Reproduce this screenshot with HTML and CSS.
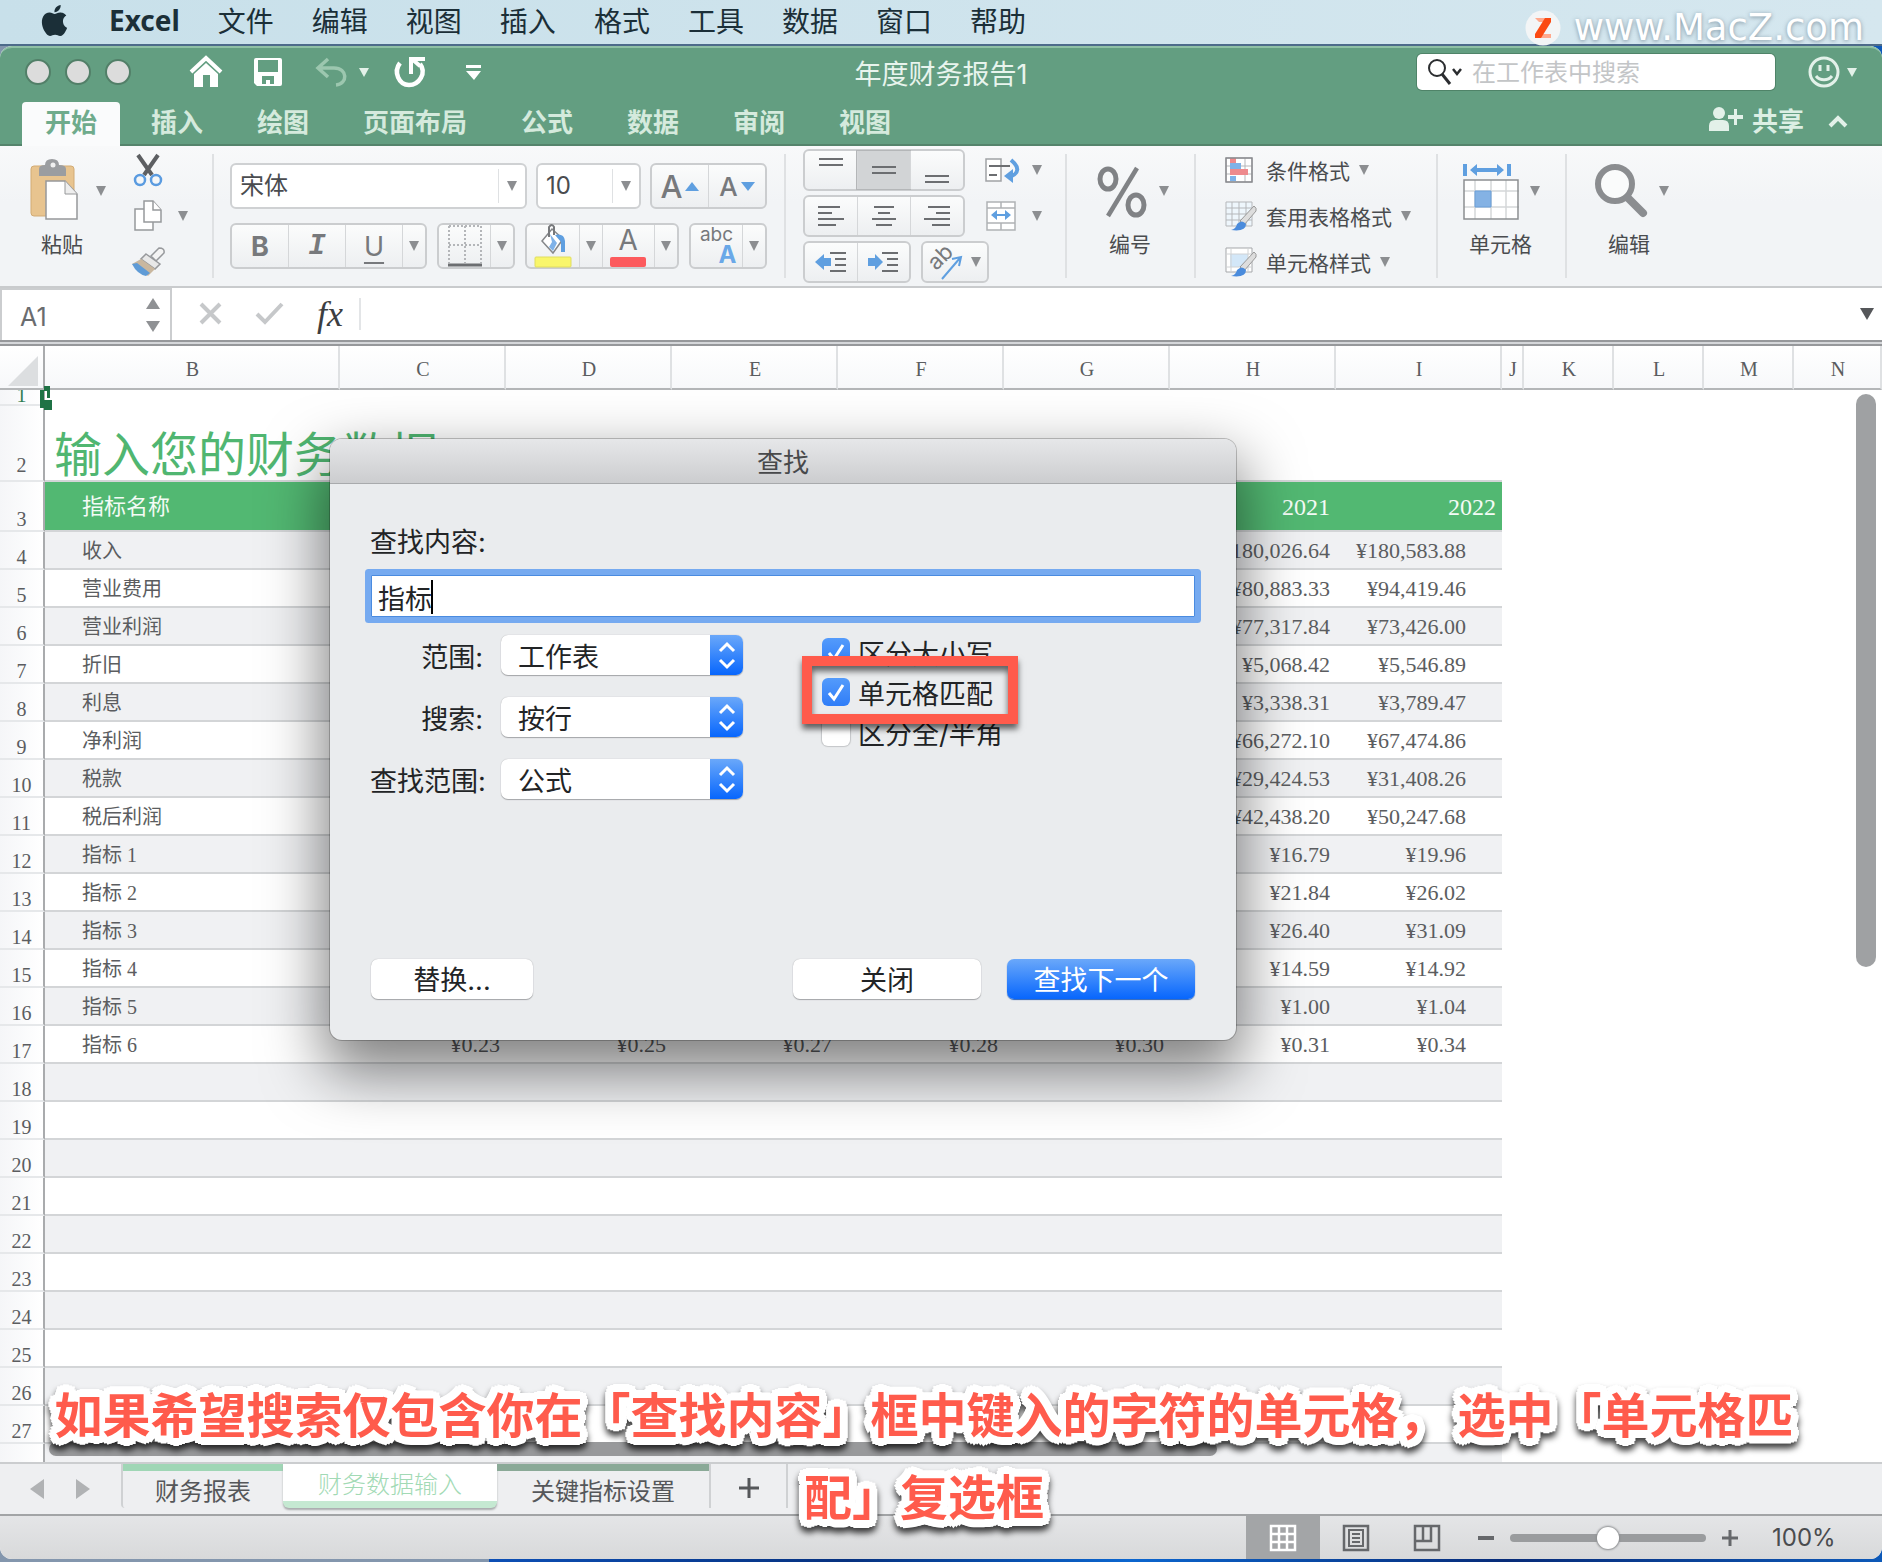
FILE: index.html
```html
<!DOCTYPE html>
<html lang="zh-CN">
<head>
<meta charset="utf-8">
<title>年度财务报告1</title>
<link rel="stylesheet" href="styles.css">
</head>
<body>
<header class="menubar">
  <svg class="apple" viewBox="0 0 24 24" aria-hidden="true"><path d="M12.152 6.896c-.948 0-2.415-1.078-3.96-1.04-2.04.027-3.91 1.183-4.961 3.014-2.117 3.675-.546 9.103 1.519 12.09 1.013 1.454 2.208 3.09 3.792 3.039 1.52-.065 2.09-.987 3.935-.987 1.831 0 2.35.987 3.96.948 1.637-.026 2.676-1.48 3.676-2.948 1.156-1.688 1.636-3.325 1.662-3.415-.039-.013-3.182-1.221-3.22-4.857-.026-3.04 2.48-4.494 2.597-4.559-1.429-2.09-3.623-2.324-4.39-2.376-2-.156-3.675 1.09-4.61 1.09zM15.53 3.83c.843-1.012 1.4-2.427 1.245-3.83-1.207.052-2.662.805-3.532 1.818-.78.896-1.454 2.338-1.273 3.714 1.338.104 2.715-.688 3.559-1.701"/></svg>
  <b class="app-name">Excel</b>
  <nav class="menus"><span>文件</span><span>编辑</span><span>视图</span><span>插入</span><span>格式</span><span>工具</span><span>数据</span><span>窗口</span><span>帮助</span></nav>
  <div class="watermark">
    <svg width="36" height="36" viewBox="0 0 36 36" aria-hidden="true"><circle cx="18" cy="18" r="17.500" fill="#f3f5f6"/><path d="M10 8h16v4h-12z" fill="#ffa98d"/><path d="M22 24h4v4H10v-4z" fill="#ffa98d"/><path d="M20 8h6v4L16 28h-6v-4z" fill="#fb4a12"/></svg>
    <span>www.MacZ.com</span>
  </div>
</header>

<main class="window">
  <div class="titlebar">
    <div class="title-left">
      <i class="light"></i><i class="light"></i><i class="light"></i>
      <button class="tool home" aria-label="主页"><svg width="32" height="32" viewBox="0 0 32 32"><path d="M1 16 16 2l15 14" fill="none" stroke="#fff" stroke-width="4"/><path d="M4 18 16 7l12 11v13h-8V19h-7v12H4z" fill="#fff"/></svg></button>
      <button class="tool save" aria-label="保存"><svg width="28" height="28" viewBox="0 0 28 28"><path fill-rule="evenodd" fill="#fff" d="M2 0h24q2 0 2 2v24q0 2-2 2H3l-3-3V2q0-2 2-2zM4 2v12h20V2zM8 18v8h4v-4h4v4h4v-8z"/></svg></button>
      <button class="tool undo" aria-label="撤销"><svg width="31" height="30" viewBox="0 0 31 30"><path d="M12 2 2 11l10 9M3 11h15c14 0 14 16 2 17" fill="none" stroke="#9cc7af" stroke-width="3.500"/></svg><i class="caret pale"></i></button>
      <button class="tool redo" aria-label="恢复"><svg width="32" height="32" viewBox="0 0 32 32"><path d="M6 7C-1 16 5 29 15 29s18-12 11-21" fill="none" stroke="#fff" stroke-width="4.500"/><path d="M17 18V3h14M18 3l8 7" fill="none" stroke="#fff" stroke-width="4"/></svg></button>
      <button class="tool custom" aria-label="自定义"><svg width="15" height="16" viewBox="0 0 15 16"><path d="M0 1h15v3H0zM0 7h15l-7 9z" fill="#fff"/></svg></button>
    </div>
    <h1 class="doc-title">年度财务报告1</h1>
    <div class="title-right">
      <label class="search">
        <svg width="36" height="30" viewBox="0 0 36 30" fill="none" stroke="#2b2d30"><circle cx="10" cy="11" r="8" stroke-width="2"/><path d="m15 17 8 10" stroke-width="3"/><path d="m26 12 4 5 4-5" stroke-width="2.500"/></svg>
        <input type="text" placeholder="在工作表中搜索" aria-label="在工作表中搜索">
      </label>
      <button class="smile" aria-label="反馈"><svg width="32" height="32" viewBox="0 0 32 32" fill="none" stroke="#e3f1e9" stroke-width="3"><circle cx="16" cy="16" r="14"/><path d="M12 9v6M20 9v6M8 20c4 5 12 5 16 0"/></svg><i class="caret pale"></i></button>
    </div>
  </div>
  <nav class="tabs">
    <button class="tab active">开始</button><button class="tab">插入</button><button class="tab">绘图</button><button class="tab">页面布局</button><button class="tab">公式</button><button class="tab">数据</button><button class="tab">审阅</button><button class="tab">视图</button>
    <button class="share"><svg width="34" height="26" viewBox="0 0 34 26" fill="#e3f1e9"><circle cx="10" cy="7" r="6"/><path d="M0 25v-5q0-6 6-6h8q6 0 6 6v5zM25 3h3v16h-3zM19 9h15v4H19z"/></svg>共享</button>
    <button class="collapse" aria-label="折叠功能区"><svg width="20" height="14" viewBox="0 0 20 14"><path d="m2 12 8-8 8 8" fill="none" stroke="#e3f1e9" stroke-width="4"/></svg></button>
  </nav>

  <section class="ribbon">
    <div class="group g-paste">
      <button class="big"><span class="big-row"><svg width="52" height="62" viewBox="0 0 52 62"><rect x="3" y="6" width="43" height="50" rx="3" fill="#e8c48f" stroke="#d2ab74"/><path d="M11 9q0-4 6-4 0-6 7-6t7 6q7 0 7 4v7H11z" fill="#9b9da0"/><circle cx="25" cy="5" r="2.500" fill="#f0f0f0"/><path d="M18 21h19l12 13v25H18z" fill="#fff" stroke="#96989a" stroke-width="1.500"/><path d="M37 21v13h12" fill="#eee" stroke="#96989a"/></svg><i class="caret"></i></span><span class="big-label">粘贴</span></button>
      <div class="rows">
        <button class="mini" aria-label="剪切"><svg width="34" height="34" viewBox="0 0 34 34"><path d="M7 2 21 22M27 2 13 22" stroke="#5d5f62" stroke-width="4"/><circle cx="9" cy="27" r="5" fill="none" stroke="#5a9be0" stroke-width="2.500"/><circle cx="25" cy="27" r="5" fill="none" stroke="#5a9be0" stroke-width="2.500"/></svg></button>
        <button class="mini" aria-label="复制"><svg width="34" height="32" viewBox="0 0 34 32" fill="#fff" stroke="#97999c" stroke-width="1.500"><path d="M4 9h18v21H4z"/><path d="M13 1h9l8 9v12H13z"/><path d="M22 1v9h8"/></svg><i class="caret"></i></button>
        <button class="mini" aria-label="格式刷"><svg width="34" height="30" viewBox="0 0 34 30"><path d="m20 9 8-8q6 0 5 5l-8 8z" fill="#f4f4f4" stroke="#97999c" stroke-width="1.500"/><path d="m15 7 14 10-5 5L10 12z" fill="#e8e8e8" stroke="#97999c" stroke-width="1.500"/><path d="M10 12 24 22l-7 7L1 17z" fill="#c9b79f"/><path d="m6 16 13 10-4 3q-9-2-14-12z" fill="#5f9bd6"/></svg></button>
      </div>
    </div>
    <i class="sep"></i>
    <div class="group g-font">
      <div class="line">
        <span class="combo w-font"><select aria-label="字体"><option>宋体</option></select><i class="combo-arrow"><i class="caret"></i></i></span>
        <span class="combo w-size"><select aria-label="字号"><option>10</option></select><i class="combo-arrow"><i class="caret"></i></i></span>
        <span class="seg w-grow"><button class="aa">A<i class="tri-up"></i></button><button class="aa small">A<i class="tri-down"></i></button></span>
      </div>
      <div class="line second">
        <span class="seg w-biu"><button class="bold">B</button><button class="ital">I</button><button class="under">U</button><button class="drop" aria-label="下划线选项"><i class="caret"></i></button></span>
        <span class="seg w-one"><button aria-label="边框"><svg width="34" height="42" viewBox="0 0 34 42"><path d="M1 1h32v37M1 1v37M17 1v37M1 20h32" fill="none" stroke="#b4b6b9" stroke-width="2" stroke-dasharray="2 2"/><path d="M0 40h34" stroke="#6c6e71" stroke-width="3"/></svg></button><button class="drop" aria-label="边框选项"><i class="caret"></i></button></span>
        <span class="seg w-two"><button aria-label="填充颜色"><svg width="36" height="42" viewBox="0 0 36 42"><path d="M7 16 17 4l11 10-10 14z" fill="#fff" stroke="#85878a" stroke-width="1.500"/><path d="M14 12V2q3-4 5 0v8" fill="none" stroke="#77797c" stroke-width="2"/><path d="m15 9 7 9-4 8-4-4 3-5z" fill="#7fb2e8"/><path d="M20 10q9-2 10 6v11h-4V17z" fill="#5f9fe0"/><rect y="32" width="36" height="10" rx="1" fill="#f9f66b" stroke="#e0dd61"/></svg></button><button class="drop" aria-label="填充选项"><i class="caret"></i></button><button aria-label="字体颜色" class="fontcolor"><span>A</span><i></i></button><button class="drop" aria-label="字体颜色选项"><i class="caret"></i></button></span>
        <span class="seg w-one"><button class="phon" aria-label="拼音"><span>abc</span><b>A</b></button><button class="drop" aria-label="拼音选项"><i class="caret"></i></button></span>
      </div>
    </div>
    <i class="sep"></i>
    <div class="group rows g-align">
      <div class="line">
        <span class="seg w-three"><button aria-label="顶端对齐"><svg width="26" height="36"><path d="M1 7h24M1 13h24"/></svg></button><button class="on" aria-label="垂直居中"><svg width="26" height="36"><path d="M1 15h24M1 21h24"/></svg></button><button aria-label="底端对齐"><svg width="26" height="36"><path d="M1 24h24M1 30h24"/></svg></button></span>
        <button class="mini wide" aria-label="自动换行"><svg width="36" height="26" viewBox="0 0 36 26"><path d="M1 2h15v22H1z" fill="#fff" stroke="#a0a2a5" stroke-width="1.500"/><path d="M4 9h21M4 18h8" stroke="#6c6e71" stroke-width="2"/><path d="M26 3q13 11-1 17" fill="none" stroke="#5f9fe0" stroke-width="4"/><path d="m19 19 9-7v14z" fill="#5f9fe0"/></svg><i class="caret"></i></button>
      </div>
      <div class="line">
        <span class="seg w-three"><button aria-label="左对齐"><svg width="26" height="24"><path d="M0 3h22M0 9h14M0 15h26M0 21h18"/></svg></button><button aria-label="居中"><svg width="26" height="24"><path d="M3 3h20M7 9h12M1 15h24M5 21h16"/></svg></button><button aria-label="右对齐"><svg width="26" height="24"><path d="M4 3h22M12 9h14M0 15h26M8 21h18"/></svg></button></span>
        <button class="mini wide" aria-label="合并"><svg width="36" height="30" viewBox="0 0 36 30"><path d="M2 1h28v28H2zM2 7h28M2 22h28M16 1v6M16 22v7" fill="#fff" stroke="#b0b2b5" stroke-width="1.500"/><path d="M8 14h16" stroke="#5f9fe0" stroke-width="2"/><path d="m6 14 6-5v10zM26 14l-6-5v10z" fill="#5f9fe0"/></svg><i class="caret"></i></button>
      </div>
      <div class="line">
        <span class="seg w-dent"><button aria-label="减少缩进"><svg width="32" height="24"><path d="M15 3h16M20 9h11M20 15h11M15 21h16"/><path d="M0 12 9 4v4h7v8H9v4z" class="blue"/></svg></button><button aria-label="增加缩进"><svg width="32" height="24"><path d="M15 3h16M20 9h11M20 15h11M15 21h16"/><path d="M16 12 8 4v4H1v8h7v4z" class="blue"/></svg></button></span>
        <span class="seg w-rot"><button aria-label="方向"><svg width="36" height="34" viewBox="0 0 36 34"><text x="3" y="24" transform="rotate(-45 8 20)" class="ab">ab</text><path class="blue-line" d="M13 34 31 13M23 14l9-2-2 9"/></svg><i class="caret"></i></button></span>
      </div>
    </div>
    <i class="sep"></i>
    <div class="group g-num">
      <button class="big"><span class="big-row"><svg width="52" height="54" viewBox="0 0 52 54" fill="none" stroke="#808285" stroke-width="5"><ellipse cx="12" cy="15" rx="8" ry="10"/><ellipse cx="40" cy="41" rx="8" ry="10"/><path d="M41 4 12 52" stroke-width="4.500"/></svg><i class="caret"></i></span><span class="big-label">编号</span></button>
    </div>
    <i class="sep"></i>
    <div class="group rows g-style">
      <button class="mini text"><svg width="32" height="30" viewBox="0 0 32 30"><path d="M2 3h26v24H2zM2 11h26M2 19h26M21 3v24" fill="#fff" stroke="#b5b7ba"/><path d="M6 3h6v5H6zM6 14h18v6H6z" fill="#ee8a8d"/><path d="M6 8h11v6H6zM6 21h6v5H6z" fill="#7fb2e8"/><path d="M2 3h26v24H2z" fill="none" stroke="#898b8e" stroke-width="1.500"/></svg><span>条件格式</span><i class="caret"></i></button>
      <button class="mini text"><svg width="32" height="34" viewBox="0 0 32 34"><path d="M2 3h26v24H2zM2 9h26M2 15h26M2 21h26M8 3v24M15 3v24M22 3v24" fill="#eef6fc" stroke="#b5b7ba"/><path d="m16 22 14-15q3 2 2 5L20 26z" fill="#ddd" stroke="#999"/><path d="M7 31q5-1 6-6 5-5 9 0 0 8-15 6z" fill="#4a8bdc"/></svg><span>套用表格格式</span><i class="caret"></i></button>
      <button class="mini text"><svg width="32" height="34" viewBox="0 0 32 34"><path d="M2 3h26v24H2z" fill="#fff" stroke="#a5a7aa"/><path d="M6 9h18v13H6z" fill="#d3e7f8"/><path d="M2 9h26M2 22h26M7 3v24M24 3v24" stroke="#d0d2d4"/><path d="m16 22 14-15q3 2 2 5L20 26z" fill="#ddd" stroke="#999"/><path d="M7 31q5-1 6-6 5-5 9 0 0 8-15 6z" fill="#4a8bdc"/></svg><span>单元格样式</span><i class="caret"></i></button>
    </div>
    <i class="sep"></i>
    <div class="group g-cell">
      <button class="big"><span class="big-row"><svg width="56" height="60" viewBox="0 0 56 60"><path d="M0 3h4v12H0zM44 3h4v12h-4zM7 9l7-6v4h20V3l7 6-7 6v-4H14v4z" fill="#5f9fe0"/><path d="M1 19h55v39H1z" fill="#fff"/><path d="M12 19v39M28 19v39M43 19v39M1 30h55M1 46h55" stroke="#d5d7d9" stroke-width="1.500"/><path d="M12 30h16v16H12z" fill="#84b2e4" stroke="#6a9fd8"/><path d="M1 19h54v39H1z" fill="none" stroke="#8c8e91" stroke-width="1.500"/></svg><i class="caret"></i></span><span class="big-label">单元格</span></button>
    </div>
    <i class="sep"></i>
    <div class="group g-edit">
      <button class="big"><span class="big-row"><svg width="53" height="54" viewBox="0 0 53 54"><circle cx="20" cy="20" r="17" fill="#fafbfb" stroke="#8b8d90" stroke-width="6"/><path d="m33 34 15 15" stroke="#8b8d90" stroke-width="8" stroke-linecap="round"/></svg><i class="caret"></i></span><span class="big-label">编辑</span></button>
    </div>
  </section>

  <div class="formula">
    <label class="namebox"><input type="text" value="A1" aria-label="名称框"><span class="spin"><i class="tri-up"></i><i class="tri-down"></i></span></label>
    <button aria-label="取消"><svg width="24" height="24" viewBox="0 0 24 24"><path d="m2 2 19 19M21 2 2 21" stroke="#c6c8ca" stroke-width="4"/></svg></button>
    <button class="ok" aria-label="输入"><svg width="30" height="24" viewBox="0 0 30 24"><path d="m2 12 8 8L27 2" fill="none" stroke="#c6c8ca" stroke-width="4"/></svg></button>
    <button class="fx">fx</button>
    <input class="formula-input" type="text" aria-label="编辑栏">
    <button class="expand" aria-label="展开"><i class="caret dark"></i></button>
  </div>

  <section class="grid">
    <table>
      <colgroup><col class="c-num"><col class="c-b"><col class="c-y"><col class="c-y"><col class="c-y"><col class="c-y"><col class="c-y"><col class="c-y"><col class="c-y"><col class="c-j"><col class="c-k"><col class="c-k"><col class="c-k"><col></colgroup>
      <thead><tr><th class="corner"><svg width="30" height="30" viewBox="0 0 30 30"><path d="M30 0v30H0z" fill="#dcdee0"/></svg></th><th>B</th><th>C</th><th>D</th><th>E</th><th>F</th><th>G</th><th>H</th><th>I</th><th>J</th><th>K</th><th>L</th><th>M</th><th>N</th></tr></thead>
      <tbody>
        <tr class="r1"><th><span>1</span></th><td colspan="13"></td></tr>
        <tr class="r2"><th>2</th><td colspan="8" class="sheet-title">输入您的财务数据</td></tr>
        <tr class="r3"><th>3</th><td>指标名称</td><td></td><td></td><td></td><td></td><td></td><td>2021</td><td>2022</td></tr>
        <tr><th>4</th><td>收入</td><td></td><td></td><td></td><td></td><td></td><td>¥180,026.64</td><td>¥180,583.88</td></tr>
        <tr><th>5</th><td>营业费用</td><td></td><td></td><td></td><td></td><td></td><td>¥80,883.33</td><td>¥94,419.46</td></tr>
        <tr><th>6</th><td>营业利润</td><td></td><td></td><td></td><td></td><td></td><td>¥77,317.84</td><td>¥73,426.00</td></tr>
        <tr><th>7</th><td>折旧</td><td></td><td></td><td></td><td></td><td></td><td>¥5,068.42</td><td>¥5,546.89</td></tr>
        <tr><th>8</th><td>利息</td><td></td><td></td><td></td><td></td><td></td><td>¥3,338.31</td><td>¥3,789.47</td></tr>
        <tr><th>9</th><td>净利润</td><td></td><td></td><td></td><td></td><td></td><td>¥66,272.10</td><td>¥67,474.86</td></tr>
        <tr><th>10</th><td>税款</td><td></td><td></td><td></td><td></td><td></td><td>¥29,424.53</td><td>¥31,408.26</td></tr>
        <tr><th>11</th><td>税后利润</td><td></td><td></td><td></td><td></td><td></td><td>¥42,438.20</td><td>¥50,247.68</td></tr>
        <tr><th>12</th><td>指标 1</td><td></td><td></td><td></td><td></td><td></td><td>¥16.79</td><td>¥19.96</td></tr>
        <tr><th>13</th><td>指标 2</td><td></td><td></td><td></td><td></td><td></td><td>¥21.84</td><td>¥26.02</td></tr>
        <tr><th>14</th><td>指标 3</td><td></td><td></td><td></td><td></td><td></td><td>¥26.40</td><td>¥31.09</td></tr>
        <tr><th>15</th><td>指标 4</td><td></td><td></td><td></td><td></td><td></td><td>¥14.59</td><td>¥14.92</td></tr>
        <tr><th>16</th><td>指标 5</td><td></td><td></td><td></td><td></td><td></td><td>¥1.00</td><td>¥1.04</td></tr>
        <tr><th>17</th><td>指标 6</td><td>¥0.23</td><td>¥0.25</td><td>¥0.27</td><td>¥0.28</td><td>¥0.30</td><td>¥0.31</td><td>¥0.34</td></tr>
        <tr><th>18</th><td colspan="8"></td></tr>
        <tr><th>19</th><td colspan="8"></td></tr>
        <tr><th>20</th><td colspan="8"></td></tr>
        <tr><th>21</th><td colspan="8"></td></tr>
        <tr><th>22</th><td colspan="8"></td></tr>
        <tr><th>23</th><td colspan="8"></td></tr>
        <tr><th>24</th><td colspan="8"></td></tr>
        <tr><th>25</th><td colspan="8"></td></tr>
        <tr><th>26</th><td colspan="8"></td></tr>
        <tr><th>27</th><td colspan="8"></td></tr>
        <tr><th></th><td colspan="8"></td></tr>
      </tbody>
    </table>
    <svg class="cell-mark" width="12" height="24" viewBox="0 0 12 24" aria-hidden="true"><path d="M0 4h4V0h6v12H7V5H4v9h8v10H4v-2H0z" fill="#1f7245"/></svg>
    <i class="vbar"></i><i class="hbar"></i>
  </section>

  <footer class="sheets">
    <button class="nav-arrow" aria-label="上一张"><svg width="14" height="20"><path d="M14 0v20L0 10z" fill="#b0b2b4"/></svg></button>
    <button class="nav-arrow next" aria-label="下一张"><svg width="14" height="20"><path d="M0 0v20l14-10z" fill="#b0b2b4"/></svg></button>
    <button class="sheet mint">财务报表</button>
    <button class="sheet current">财务数据输入</button>
    <button class="sheet moss">关键指标设置</button>
    <button class="add" aria-label="新建工作表"><svg width="20" height="20"><path d="M10 0v20M0 10h20" stroke="#55575a" stroke-width="3"/></svg></button>
  </footer>
  <footer class="status">
    <button class="view on" aria-label="普通"><svg width="28" height="28" viewBox="0 0 28 28"><path d="M2 2h24v24H2zM2 10h24M2 18h24M10 2v24M18 2v24" fill="none" stroke="#fff" stroke-width="2.500"/></svg></button>
    <button class="view" aria-label="页面布局"><svg width="28" height="28" viewBox="0 0 28 28" fill="none" stroke="#66686b" stroke-width="2.500"><path d="M2 2h24v24H2z"/><path d="M7 6h14v16H7zM10 10h8M10 14h8M10 18h8" stroke-width="2"/></svg></button>
    <button class="view" aria-label="分页预览"><svg width="28" height="28" viewBox="0 0 28 28" fill="none" stroke="#66686b" stroke-width="2.500"><path d="M2 2h24v24H2zM2 17h16V2M10 2v15"/></svg></button>
    <button class="zoom-btn" aria-label="缩小"><svg width="16" height="16"><path d="M0 8h16" stroke="#66686b" stroke-width="4"/></svg></button>
    <input class="zoom" type="range" min="0" max="100" value="50" aria-label="缩放">
    <button class="zoom-btn" aria-label="放大"><svg width="16" height="16"><path d="M0 8h16M8 0v16" stroke="#66686b" stroke-width="3"/></svg></button>
    <span class="percent">100%</span>
  </footer>

  <form class="dialog" role="dialog" aria-label="查找">
    <h2>查找</h2>
    <div class="dialog-body">
      <label class="find-label" for="find">查找内容:</label>
      <div class="find-field"><input id="find" type="text" value="指标"><i class="cursor"></i></div>
      <div class="options">
        <div class="selects">
          <label for="s1">范围:</label><span class="popup"><select id="s1"><option>工作表</option></select><svg width="33" height="40" viewBox="0 0 33 40"><path d="m10 16 7-7 7 7M10 25l7 7 7-7"/></svg></span>
          <label for="s2">搜索:</label><span class="popup"><select id="s2"><option>按行</option></select><svg width="33" height="40" viewBox="0 0 33 40"><path d="m10 16 7-7 7 7M10 25l7 7 7-7"/></svg></span>
          <label for="s3">查找范围:</label><span class="popup"><select id="s3"><option>公式</option></select><svg width="33" height="40" viewBox="0 0 33 40"><path d="m10 16 7-7 7 7M10 25l7 7 7-7"/></svg></span>
        </div>
        <div class="checks">
          <label><span class="box"><input type="checkbox" checked><svg viewBox="0 0 28 28"><path d="m7 15 5 6 9-14"/></svg></span><span class="check-text">区分大小写</span></label>
          <label><span class="box"><input type="checkbox" checked><svg viewBox="0 0 28 28"><path d="m7 15 5 6 9-14"/></svg></span><span class="check-text">单元格匹配</span></label>
          <label><span class="box"><input type="checkbox"></span><span class="check-text">区分全/半角</span></label>
        </div>
      </div>
      <div class="actions"><button type="button" class="replace">替换...</button><button type="button" class="wide">关闭</button><button type="button" class="wide primary">查找下一个</button></div>
    </div>
    <i class="highlight"></i>
  </form>
</main>
<p class="caption">如果希望搜索仅包含你在「查找内容」框中键入的字符的单元格， 选中「单元格匹<br>配」复选框</p>
</body>
</html>
```
FILE: styles.css
```css
* { box-sizing: border-box; }
body {
  margin: 0;
  height: 100vh;
  display: flex;
  flex-direction: column;
  position: relative;
  overflow: hidden;
  font-family: Inter, "Noto Sans CJK SC", sans-serif;
  color: #4a4c4f;
  background: linear-gradient(to right, #8396ad 26%, #0c4fb5 26%, #06317f 45%, #0b66cf 60%, #072b78 80%, #0d59b8);
}
button, input, select { font: inherit; color: inherit; margin: 0; padding: 0; border: 0; background: none; outline: 0; appearance: none; }
button { display: flex; align-items: center; justify-content: center; white-space: nowrap; }
svg { display: block; flex: none; overflow: visible; }
i { font-style: normal; }

.menubar {
  flex: none;
  height: 46px;
  display: flex;
  align-items: center;
  padding: 0 18px 4px 39px;
  background: linear-gradient(to right, #c8e0ea, #d5e7ef);
  border-bottom: 2px solid #4d6b8a;
  font-size: 28px;
  color: #1b2f38;
}
.apple { width: 31px; height: 31px; fill: #1b2f38; }
.app-name { font-size: 28px; margin: 0 38px 0 39px; font-family: "Noto Sans", sans-serif; }
.menus { display: flex; gap: 38px; }
.watermark {
  margin-left: auto;
  display: flex;
  align-items: center;
  gap: 13px;
  position: relative;
  top: 8px;
  z-index: 3;
  color: #fff;
  font: 37px/44px "DejaVu Sans", sans-serif;
  text-shadow: 0 1px 4px rgba(90, 110, 125, .7);
}

.window { flex: 1; min-height: 0; margin-bottom: 3px; display: flex; flex-direction: column; position: relative; border-radius: 12px; background: #fff; }
.titlebar {
  flex: none;
  height: 52px;
  display: grid;
  grid-template-columns: 1fr auto 1fr;
  align-items: center;
  padding-bottom: 2px;
  background: #639e81;
  border-top: 2px solid #8fc0a5;
  border-radius: 12px 12px 0 0;
}
.title-left { display: flex; align-items: center; padding-left: 25px; }
.light { width: 26px; height: 26px; margin-right: 14px; border-radius: 50%; background: #dcdcdc; border: 2px solid #527f68; }
.home { margin-left: 45px; }
.save { margin-left: 32px; }
.undo { margin-left: 34px; gap: 12px; }
.redo { margin-left: 25px; }
.custom { margin-left: 40px; }
.doc-title { margin: 0; font-size: 27px; font-weight: 400; color: #e8f4ed; }
.title-right { display: flex; justify-content: flex-end; align-items: center; padding-right: 25px; }
.search { width: 358px; height: 36px; display: flex; align-items: center; padding-left: 10px; gap: 9px; background: #fff; border-radius: 5px; box-shadow: 0 0 0 1px #4f8368; }
.search input { flex: 1; min-width: 0; padding-top: 2px; font-size: 24px; line-height: 34px; }
.search input::placeholder { color: #c3c5c7; }
.smile { margin-left: 33px; gap: 7px; }

.caret { width: 0; height: 0; border: 5px solid transparent; border-top: 10px solid #8c8e91; border-bottom: 0; }
.caret.pale { border-width: 9px 5px 0; border-top-color: #e3f1e9; }
.caret.dark { border-width: 12px 7px 0; border-top-color: #55575a; }
.tri-up, .tri-down { width: 0; height: 0; border: 7px solid transparent; }
.tri-up { border-bottom: 9px solid #5f9fe0; border-top: 0; }
.tri-down { border-top: 9px solid #5f9fe0; border-bottom: 0; }

.tabs { flex: none; height: 48px; padding: 4px 0 0 22px; display: flex; gap: 8px; background: #639e81; border-bottom: 2px solid #55846c; }
.tab { height: 44px; padding: 0 23px 7px; font-size: 26px; font-weight: 700; color: #d5eadd; }
.tab.active { background: #fafbfc; color: #6fab8c; border-radius: 4px 4px 0 0; }
.share { margin-left: auto; gap: 9px; padding-bottom: 8px; font-size: 26px; font-weight: 700; color: #dcefe4; }
.collapse { margin: 0 34px 0 16px; padding-bottom: 4px; }

.ribbon { flex: none; height: 142px; display: flex; background: linear-gradient(#f8f9fa, #f2f4f6 40%); border-bottom: 2px solid #c9cbcd; }
.sep { width: 2px; height: 124px; margin-top: 8px; background: #dfe1e3; flex: none; }
.group { display: flex; flex: none; }
.rows { display: grid; grid-auto-rows: 46px; align-content: start; justify-items: start; padding-top: 1px; }
.line { display: flex; align-items: center; }
.mini { height: 46px; gap: 13px; }
.mini.wide { height: 42px; gap: 11px; margin-left: 20px; }
.mini.text { gap: 9px; font-size: 21px; }
.mini.text svg { margin-right: 1px; }
.big { flex-direction: column; justify-content: flex-start; align-items: flex-start; }
.big-row { height: 62px; display: flex; align-items: center; gap: 11px; margin-top: 14px; }
.big-label { font-size: 21px; line-height: 24px; margin: 11px 0 0 13px; }
.g-paste { width: 212px; padding-left: 28px; }
.g-paste .big-row { gap: 16px; }
.g-paste .rows { margin-left: 25px; }
.g-font { flex-direction: column; gap: 14px; padding: 17px 17px 0 16px; }
.g-font .line { gap: 9px; }
.g-font .line.second { gap: 10px; }
.g-align { padding: 1px 23px 0 17px; }
.g-num { padding: 0 25px 0 29px; }
.g-style { padding: 1px 25px 0 28px; }
.g-cell { padding: 0 25px; }
.g-cell .big-label { margin-left: 6px; }
.g-edit { padding-left: 28px; }

.combo { height: 46px; display: grid; background: #fff; border: 2px solid #cfd1d3; border-radius: 6px; font-size: 24px; }
.combo > * { grid-area: 1 / 1; }
.combo select { padding: 0 0 2px 8px; }
.combo-arrow { justify-self: end; align-self: stretch; width: 27px; margin: 4px 0; border-left: 1px solid #dfe1e3; display: grid; place-items: center; pointer-events: none; }
.w-font { width: 297px; }
.w-size { width: 105px; }
.w-grow { width: 117px; }
.w-biu { width: 197px; }
.w-one { width: 78px; }
.w-two { width: 154px; }
.w-three { width: 162px; }
.w-dent { width: 108px; }
.w-rot { width: 68px; margin-left: 10px; }
.seg { height: 46px; display: flex; border: 2px solid #cbcdcf; border-radius: 6px; background: linear-gradient(#fbfcfc, #edeff1); color: #77797c; }
.seg button { flex: 1; min-width: 0; }
.seg button + button { border-left: 1px solid #d5d7d9; }
.seg .drop { flex: none; width: 23px; }
.g-align .seg { height: 42px; }
.g-align .seg path { fill: none; stroke: #6c6e71; stroke-width: 2; }
.g-align .seg .blue { fill: #5f9fe0; stroke: none; }
.g-align .seg .blue-line { stroke: #5f9fe0; }
.g-align .w-rot .caret { margin-left: 6px; }
.seg .on { background: #d2d4d6; box-shadow: 0 0 0 1px #b4b6b8; }
.ab { font-size: 22px; fill: #77797c; }
.aa { font-size: 31px; gap: 3px; font-weight: 500; }
.aa.small { font-size: 26px; }
.bold, .ital, .under { font-size: 27px; }
.bold { font-weight: 700; }
.ital { font-family: "Liberation Mono", monospace; font-style: italic; font-weight: 700; font-size: 29px; }
.under { text-decoration: underline; text-underline-offset: 6px; text-decoration-thickness: 2px; }
.fontcolor { flex-direction: column; font-size: 28px; line-height: 28px; }
.fontcolor i { width: 36px; height: 10px; margin-top: 3px; background: #fc5a5d; border-radius: 2px; }
.phon { flex-direction: column; font-size: 19px; line-height: 18px; }
.phon b { font-size: 24px; line-height: 22px; color: #6aa8e8; margin-left: 22px; }

.formula { flex: none; height: 58px; display: flex; align-items: center; padding-bottom: 4px; background: #fff; border-bottom: 2px solid #96989b; box-shadow: inset 0 -2px #d5d7da, inset 0 -4px #96989b; position: relative; z-index: 1; }
.namebox { width: 172px; height: 52px; display: flex; align-items: center; padding: 0 10px 0 18px; border: 2px solid #cbcdcf; border-bottom: 0; }
.namebox input { width: 100px; padding-top: 4px; font-size: 25px; color: #6a6c6f; }
.spin { display: grid; gap: 12px; margin-left: auto; }
.spin .tri-up { border-bottom: 11px solid #8f9194; }
.spin .tri-down { border-top: 11px solid #8f9194; }
.formula > button { margin-left: 27px; }
.formula > .ok { margin-left: 32px; }
.formula > .fx { margin: 0 16px 0 32px; font: italic 400 36px/34px "Liberation Serif", serif; color: #3c3e41; }
.formula-input { flex: 1; height: 32px; border-left: 2px solid #e3e5e7; }
.formula > .expand { margin: 0 8px 0 20px; }

.grid { flex: 1 1 0; min-height: 0; overflow: hidden; position: relative; background: #fff; }
table { width: 100%; table-layout: fixed; border-spacing: 0; font: 20px/24px "Liberation Serif", "Noto Sans CJK SC", serif; color: #5b5d60; }
.c-num { width: 45px; }
.c-b { width: 295px; }
.c-y { width: 166px; }
.c-j { width: 22px; }
.c-k { width: 90px; }
th, td { padding: 0; white-space: nowrap; font-weight: 400; }
thead th { height: 44px; padding: 3px 0 0 2px; border-right: 2px solid #dfe1e3; border-bottom: 2px solid #b4b6b8; background: linear-gradient(#fff, #f7f8fa); }
thead .corner { padding-left: 0; border-right-color: #a9abad; }
.corner svg { margin: 4px 0 0 8px; }
tbody th { height: 38px; vertical-align: bottom; line-height: 22px; background: linear-gradient(to right, #f5f6f8, #fff); border-right: 2px solid #a9abad; border-bottom: 2px solid #e6e8ea; }
tbody td { height: 38px; text-align: right; padding: 2px 6px 0 0; font-size: 22px; border-bottom: 2px solid #d3d5d7; }
tbody td:nth-child(2) { text-align: left; padding-left: 37px; font-size: 20px; }
tbody td:nth-child(9) { padding-right: 36px; }
tbody tr:nth-child(even) td { background: #f0f1f3; }
.r1 th { height: 16px; color: #2f7d52; }
.r1 span { height: 14px; display: flex; align-items: flex-end; justify-content: center; overflow: hidden; line-height: 18px; }
.r1 td { height: 16px; padding: 0; border-bottom: 0; }
tbody .r2 th { height: 76px; padding-bottom: 4px; }
tbody .r2 td.sheet-title { height: 76px; padding: 0 0 0 9px; background: #fff; font-size: 48px; line-height: 48px; vertical-align: bottom; color: #50b671; }
.r3 th { height: 50px; }
tbody .r3 td { height: 50px; background: #52b872; color: #f4fbf6; font-size: 24px; }
tbody .r3 td:nth-child(2) { font-size: 22px; }
tbody .r3 td:nth-child(9) { padding-right: 6px; }
.cell-mark { position: absolute; left: 40px; top: 40px; }
.vbar { position: absolute; right: 6px; top: 48px; width: 20px; height: 573px; border-radius: 10px; background: #9fa1a3; }
.hbar { position: absolute; left: 49px; bottom: 6px; width: 1168px; height: 14px; border-radius: 7px; background: #98999b; }

.sheets { flex: none; height: 52px; display: flex; background: #eeeff1; border-top: 2px solid #cbcdcf; font-size: 24px; color: #55575a; }
.nav-arrow { margin-left: 30px; }
.nav-arrow.next { margin: 0 31px 0 32px; }
.sheet { padding: 0 32px; height: 44px; border-left: 2px solid #cfd1d3; }
.sheet.mint { width: 162px; box-shadow: inset 0 7px #9fd6b5; border-radius: 0 0 4px 4px; padding-top: 7px; }
.sheet.current { width: 214px; background: #fff; color: #a2dab5; font-weight: 300; border-bottom: 7px solid #c5e9d2; border-left: 0; border-radius: 0 0 6px 6px; box-shadow: 0 2px 2px #a9abad; }
.sheet.moss { width: 214px; box-shadow: inset 0 7px #8aa997; padding-top: 7px; border-left: 0; border-right: 2px solid #cfd1d3; }
.add { width: 77px; height: 44px; padding-top: 4px; border-right: 2px solid #cfd1d3; }

.status { flex: none; height: 45px; display: flex; align-items: center; justify-content: flex-end; padding-right: 46px; background: linear-gradient(#e4e5e7, #d8d9da); border-top: 2px solid #a2a4a6; border-radius: 0 0 12px 12px; }
.view { width: 71px; height: 43px; }
.view.on { width: 74px; background: #a3a5a7; }
.zoom-btn { margin: 0 16px; }
.zoom { width: 196px; height: 26px; }
.zoom::-webkit-slider-runnable-track { height: 8px; border-radius: 4px; background: #9a9c9e; }
.zoom::-webkit-slider-thumb { appearance: none; width: 22px; height: 22px; margin-top: -7px; border-radius: 50%; background: #fff; box-shadow: 0 0 2px 1px #8c8e90; }
.percent { margin-left: 18px; width: 64px; font-size: 24px; }

.dialog { position: absolute; left: 330px; top: 393px; z-index: 2; width: 906px; height: 601px; display: flex; flex-direction: column; border-radius: 12px; background: #eaecee; font-size: 27px; line-height: 34px; color: #222426; box-shadow: 0 0 0 1px rgba(0, 0, 0, .22), 0 26px 60px 6px rgba(0, 0, 0, .5); }
.dialog h2 { flex: none; height: 45px; margin: 0; padding-top: 7px; font-size: 26px; font-weight: 400; text-align: center; color: #48494b; background: linear-gradient(#e6e7e9, #cccdcf); border-bottom: 1px solid #a8aaac; border-radius: 12px 12px 0 0; }
.dialog-body { flex: 1; display: flex; flex-direction: column; padding: 42px 41px 41px 40px; }
.find-field { position: relative; margin: 15px 0 0 1px; }
.find-field input { display: block; width: 100%; height: 42px; padding: 3px 6px 0; background: #fff; border: 1px solid #4a8be0; box-shadow: 0 0 0 6px #76aaf0; border-radius: 1px; }
.cursor { position: absolute; left: 60px; top: 5px; width: 2px; height: 34px; background: #000; }
.options { display: flex; gap: 79px; margin-top: 18px; }
.selects { display: grid; grid-template-columns: 113px 242px; column-gap: 18px; row-gap: 22px; text-align: right; align-items: center; white-space: nowrap; }
.selects label { padding-top: 5px; }
.popup { display: grid; height: 40px; }
.popup > * { grid-area: 1 / 1; }
.popup select { padding: 5px 17px 0; background: #fff; border-radius: 7px; box-shadow: 0 0 1px #a4a6a8, 0 1px 1px #a4a6a8; }
.popup svg { justify-self: end; border-radius: 0 7px 7px 0; background: linear-gradient(#6aa8fa, #0766fd); pointer-events: none; fill: none; stroke: #fff; stroke-width: 3; }
.checks { display: grid; gap: 12px; align-content: start; padding-top: 3px; }
.checks label { height: 28px; display: flex; align-items: center; gap: 8px; white-space: nowrap; }
.check-text { padding-top: 5px; }
.box { width: 28px; height: 28px; display: grid; }
.box > * { grid-area: 1 / 1; }
.box input { background: #fff; border-radius: 6px; box-shadow: 0 0 1px 1px #c4c6c8; }
.box input:checked { background: linear-gradient(#549bfb, #2f7df8); box-shadow: none; }
.box svg { fill: none; stroke: #fff; stroke-width: 3; pointer-events: none; }
.actions { display: flex; margin-top: auto; }
.actions button { width: 162px; height: 40px; padding-top: 3px; background: #fff; border-radius: 7px; box-shadow: 0 0 1px #a4a6a8, 0 1px 1px #a4a6a8; }
.actions .replace { margin: 0 auto 0 1px; }
.actions .wide { width: 188px; margin-left: 26px; }
.actions .primary { background: linear-gradient(#6aa8fa, #0766fd); color: #fff; box-shadow: 0 1px 1px #2a62b8; }
.highlight { position: absolute; left: 472px; top: 217px; width: 216px; height: 68px; border: 10px solid #ff5b4c; box-shadow: 0 5px 6px rgba(0, 0, 0, .6), inset 0 5px 6px rgba(0, 0, 0, .6); pointer-events: none; }

.caption {
  position: absolute;
  left: 0;
  right: 34px;
  bottom: 27px;
  z-index: 4;
  margin: 0;
  text-align: center;
  white-space: nowrap;
  text-spacing-trim: space-all;
  font: 700 48px/82px "Noto Sans CJK SC", sans-serif;
  color: #ff5b4c;
  text-shadow:
    8px 0 #fff, 7px 3px #fff, 6px 6px #fff, 3px 7px #fff, 0 8px #fff, -3px 7px #fff, -6px 6px #fff, -7px 3px #fff,
    -8px 0 #fff, -7px -3px #fff, -6px -6px #fff, -3px -7px #fff, 0 -8px #fff, 3px -7px #fff, 6px -6px #fff, 7px -3px #fff,
    4px 0 #fff, 3px 3px #fff, 0 4px #fff, -3px 3px #fff, -4px 0 #fff, -3px -3px #fff, 0 -4px #fff, 3px -3px #fff;
  filter: drop-shadow(0 5px 3px rgba(0, 0, 0, .75));
}
```
